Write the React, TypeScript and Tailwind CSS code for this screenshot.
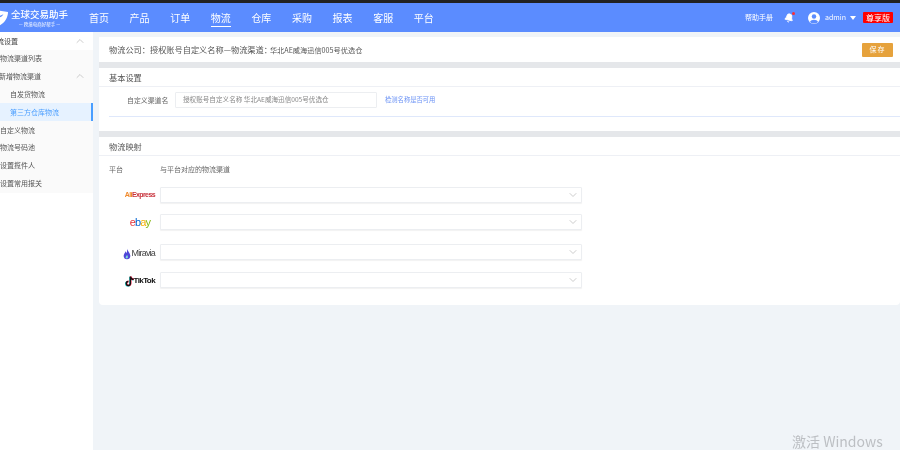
import { ChevronDown, ChevronUp, Bell } from "lucide-react";

const navItems = ["首页", "产品", "订单", "物流", "仓库", "采购", "报表", "客服", "平台"];

const SideRow = ({ label, indent, up, active, head }: { label: string; indent: string; up?: boolean; active?: boolean; head?: boolean }) => (
  <div className={`flex h-[17.8px] items-center justify-between ${active ? "border-r-2 border-[#4a9eff] bg-[#e6f2ff] text-[#4a9eff]" : head ? "bg-white text-[#444]" : "text-[#555]"}`}>
    <span className={`whitespace-nowrap text-[7px] ${indent}`}>{label}</span>
    {up && <ChevronUp className="mr-[7px] h-3 w-3 text-[#bbb]" strokeWidth={1.5} />}
  </div>
);

const PlatformRow = ({ children, className }: { children: React.ReactNode; className: string }) => (
  <div className={`flex h-[16px] items-center ${className}`}>
    <div className="flex w-[61px] items-center justify-end pr-[5px]">{children}</div>
    <div className="flex h-[16px] w-[422px] items-center justify-end rounded-[1px] border border-[#eceef1] bg-white pr-[2px] shadow-[0_1px_1px_#f2f2f2]">
      <ChevronDown className="h-3 w-3 text-[#bbb]" strokeWidth={1.5} />
    </div>
  </div>
);

export default function App() {
  return (
    <div className="relative flex h-[450px] w-[900px] flex-col overflow-hidden bg-[#f0f4f8] font-['Noto_Sans_CJK_SC','Liberation_Sans',sans-serif] blur-[0.4px]">
      <div className="h-[3px] bg-[#222]" />
      <header className="flex h-[29px] items-center bg-[#5b8cff] text-white">
        <div className="flex w-[89px] items-center">
          <svg viewBox="0 0 24 24" className="-ml-[10px] h-[18px] w-[18px]" fill="white">
            <path d="M2 4 L12 2 L24 4 C24 12 19 20 10 23 C6 21 3 18 1 14 C8 14 16 11 18 7 C12 10 6 11 1 10 Z" />
          </svg>
          <div className="ml-[3px] flex flex-col gap-[2px]">
            <span className="whitespace-nowrap text-[9.5px] font-medium leading-[11px]">全球交易助手</span>
            <span className="whitespace-nowrap text-center text-[4.5px] leading-[5px]">— 跨境电商好帮手 —</span>
          </div>
        </div>
        <nav className="mt-[1px] flex gap-[20.6px]">
          {navItems.map((item) => (
            <span key={item} className="relative text-[10px] leading-[14px]">
              {item}
              {item === "物流" && <span className="absolute -bottom-[2px] left-0 h-[1px] w-full bg-white" />}
            </span>
          ))}
        </nav>
        <div className="ml-auto flex items-center pr-[7px]">
          <span className="text-[7px]">帮助手册</span>
          <div className="relative ml-[11px]">
            <Bell className="h-[10px] w-[10px] rotate-12" fill="white" />
            <span className="absolute -right-[1px] -top-[1px] h-[3px] w-[3px] rounded-full bg-red-500" />
          </div>
          <svg viewBox="0 0 24 24" className="ml-[14px] h-3 w-3">
            <circle cx="12" cy="12" r="12" fill="white" />
            <circle cx="12" cy="9" r="4.5" fill="#5b8cff" />
            <path d="M4 20 C6 14 18 14 20 20 C16 24 8 24 4 20 Z" fill="#5b8cff" />
          </svg>
          <span className="ml-[5px] text-[7px]">admin</span>
          <span className="ml-1 h-0 w-0 border-x-[3.5px] border-t-[4px] border-x-transparent border-t-white" />
          <span className="ml-[7px] flex h-[11px] w-[30px] items-center justify-center rounded-[1px] bg-[#f00] text-[8px]">尊享版</span>
        </div>
      </header>
      <div className="flex min-h-0 flex-1">
        <aside className="w-[93px] shrink-0 bg-white">
          <div className="bg-[#fafafa] pb-[1px]">
            <SideRow label="物流设置" indent="-ml-[10px]" up head />
            <SideRow label="物流渠道列表" indent="" />
            <SideRow label="新增物流渠道" indent="-ml-[1px]" up />
            <SideRow label="自发货物流" indent="ml-[10px]" />
            <SideRow label="第三方仓库物流" indent="ml-[10px]" active />
            <SideRow label="自定义物流" indent="" />
            <SideRow label="物流号码池" indent="" />
            <SideRow label="设置揽件人" indent="" />
            <SideRow label="设置常用报关" indent="" />
          </div>
        </aside>
        <main className="ml-[6px] min-w-0 flex-1 pt-[5px]">
          <section className="flex h-[25px] items-center justify-between bg-white pl-[10px] pr-[7px] text-[#555]">
            <div className="flex items-baseline whitespace-nowrap text-[8.2px]">
              物流公司：授权账号自定义名称—物流渠道：<span className="-ml-[2px] text-[7.2px]">华北AE威海迅信005号优选仓</span>
            </div>
            <button className="h-[14px] w-[31px] rounded-[1px] bg-[#e6a23c] text-[7px] tracking-[1px] text-white">保存</button>
          </section>
          <div className="h-[6px] bg-[#e5e7ea]" />
          <section className="h-[63px] bg-white">
            <div className="flex h-[19px] items-center border-b border-[#eef0f5] pl-[10px] text-[8.2px] text-[#555]">基本设置</div>
            <div className="ml-[10px] flex h-[30px] items-start border-b border-[#dfe8fb] pt-[5px]">
              <span className="ml-[18px] w-[41px] whitespace-nowrap text-right text-[6.9px] leading-[16px] text-[#666]">自定义渠道名</span>
              <div className="ml-[7px] flex h-[16px] w-[202px] items-center whitespace-nowrap rounded-[1px] border border-[#eceef1] pl-[7px] text-[6.6px] text-[#888]">
                授权账号自定义名称 华北AE威海迅信005号优选仓
              </div>
              <span className="ml-[8px] text-[6.3px] leading-[16px] text-[#6c93f5]">检测名称是否可用</span>
            </div>
          </section>
          <div className="h-[6px] bg-[#e5e7ea]" />
          <section className="h-[168px] rounded-b-sm bg-white">
            <div className="flex h-[19px] items-center border-b border-[#eef0f5] pl-[10px] text-[8.2px] text-[#555]">物流映射</div>
            <div className="flex h-[27px] items-center pl-[10px] text-[7px] text-[#666]">
              <span className="w-[51px]">平台</span>
              <span>与平台对应的物流渠道</span>
            </div>
            <div className="flex flex-col">
              <PlatformRow className="mt-[4px]">
                <span className="whitespace-nowrap font-['Liberation_Sans'] text-[7px] font-bold tracking-[-0.6px]">
                  <span className="text-[#f08a2c]">Ali</span>
                  <span className="text-[#c8323c]">Express</span>
                </span>
              </PlatformRow>
              <PlatformRow className="mt-[11px]">
                <span className="mr-[5px] font-['Liberation_Sans'] text-[11px] leading-none tracking-[-0.9px]">
                  <span className="text-[#e53238]">e</span>
                  <span className="text-[#0064d2]">b</span>
                  <span className="text-[#f5af02]">a</span>
                  <span className="text-[#86b817]">y</span>
                </span>
              </PlatformRow>
              <PlatformRow className="mt-[14px]">
                <span className="mt-[3px] flex items-center">
                  <svg viewBox="0 0 12 16" className="h-[12px] w-[8px]">
                    <path d="M6 0 C7 4 11 6 11 11 C11 14 9 16 6 16 C3 16 1 14 1 11 C1 8 3 7 4 4 C5 5 5 6 6 7 Z" fill="#4f46d8" />
                    <path d="M6 9 C7 11 8 12 7 14 C6 15 4 15 4 13 C4 11 6 11 6 9 Z" fill="#7fe0d8" />
                  </svg>
                  <span className="ml-[1px] font-['Liberation_Sans'] text-[9px] leading-none tracking-[-0.8px] text-[#444]">Miravia</span>
                </span>
              </PlatformRow>
              <PlatformRow className="mt-[12px]">
                <span className="mt-[2px] flex items-center">
                  <svg viewBox="0 0 11 14" className="h-[13px] w-[9px]">
                    <path d="M6.5 1 V9.5 A2.5 2.5 0 1 1 4 7 M6.5 1 C7 3 8.5 4.5 10.5 4.5" fill="none" stroke="#25f4ee" strokeWidth="2" transform="translate(-0.5,0.4)" />
                    <path d="M6.5 1 V9.5 A2.5 2.5 0 1 1 4 7 M6.5 1 C7 3 8.5 4.5 10.5 4.5" fill="none" stroke="#fe2c55" strokeWidth="2" transform="translate(0.5,-0.2)" />
                    <path d="M6.5 1 V9.5 A2.5 2.5 0 1 1 4 7 M6.5 1 C7 3 8.5 4.5 10.5 4.5" fill="none" stroke="#111" strokeWidth="1.8" />
                  </svg>
                  <span className="font-['Liberation_Sans'] text-[8px] font-bold leading-none tracking-[-0.6px] text-[#111]">TikTok</span>
                </span>
              </PlatformRow>
            </div>
          </section>
        </main>
      </div>
      <span className="absolute left-[792px] top-[433px] text-[14px] leading-[17px] text-[#bcbfc3]">激活 Windows</span>
    </div>
  );
}
